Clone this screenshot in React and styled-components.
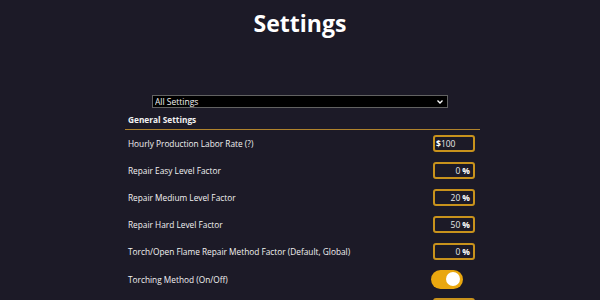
import React from 'react'
import styled, { createGlobalStyle } from 'styled-components'

const GlobalStyle = createGlobalStyle`
  html, body {
    margin: 0;
    padding: 0;
    background: #1c1a27;
    color: #f2f2f2;
    font-family: "Open Sans", "Noto Sans", sans-serif;
    overflow: hidden;
  }
`

const Page = styled.div`
  width: 600px;
  height: 300px;
  display: flex;
  flex-direction: column;
  align-items: center;
`

const Title = styled.h1`
  margin: 6px 0 0;
  font-size: 23px;
  font-weight: 700;
  line-height: 34px;
  color: #ffffff;
`

const Filter = styled.select`
  margin-top: 55px;
  width: 296px;
  height: 15px;
  padding: 0 2px;
  background: #000;
  color: #f0f0f0;
  border: 1px solid #626262;
  font-family: inherit;
  font-size: 8.5px;
  appearance: none;
  background-image: url("data:image/svg+xml;utf8,<svg xmlns='http://www.w3.org/2000/svg' width='8' height='8' viewBox='0 0 8 8'><path d='M1.5 2.5 L4 5 L6.5 2.5' fill='none' stroke='white' stroke-width='1.3'/></svg>");
  background-repeat: no-repeat;
  background-position: right 3px center;
  outline: none;
`

const Panel = styled.div`
  width: 355px;
  margin: 6px 0 0 5px;
`

const SectionTitle = styled.div`
  font-size: 8.3px;
  font-weight: 700;
  padding: 0 3px 3px;
  border-bottom: 1px solid #b0832c;
  line-height: 12px;
`

const Row = styled.div`
  display: flex;
  align-items: center;
  justify-content: space-between;
  height: ${(p) => p.$h || 27}px;
  padding: 0 5px 0 3px;
  font-size: 8.3px;
`

const Box = styled.div`
  box-sizing: border-box;
  width: 42px;
  height: 17px;
  border: 2px solid #c8921c;
  border-radius: 3px;
  display: flex;
  align-items: center;
  justify-content: ${(p) => (p.$left ? 'flex-start' : 'flex-end')};
  padding: 0 3px 0 1px;
  font-size: 8.5px;
  color: #e8e8e8;
  gap: ${(p) => (p.$left ? 0 : 2)}px;
`

const Sign = styled.b`
  font-weight: 700;
  color: #fff;
`

const Toggle = styled.div`
  width: 32px;
  height: 19px;
  margin-right: 12px;
  border-radius: 10px;
  background: #e9a70f;
  display: flex;
  align-items: center;
  justify-content: flex-end;
  padding: 0 3px;
  box-sizing: border-box;
  &::after {
    content: '';
    width: 14px;
    height: 14px;
    border-radius: 50%;
    background: #fff;
  }
`

const rows = [
  { label: 'Hourly Production Labor Rate (?)', value: '100', money: true },
  { label: 'Repair Easy Level Factor', value: '0' },
  { label: 'Repair Medium Level Factor', value: '20' },
  { label: 'Repair Hard Level Factor', value: '50' },
  { label: 'Torch/Open Flame Repair Method Factor (Default, Global)', value: '0' },
]

export default function App() {
  return (
    <Page>
      <GlobalStyle />
      <Title>Settings</Title>
      <Filter defaultValue="all">
        <option value="all">All Settings</option>
      </Filter>
      <Panel>
        <SectionTitle>General Settings</SectionTitle>
        {rows.map((r) => (
          <Row key={r.label}>
            <span>{r.label}</span>
            {r.money ? (
              <Box $left>
                <Sign>$</Sign>
                {r.value}
              </Box>
            ) : (
              <Box>
                {r.value}
                <Sign>%</Sign>
              </Box>
            )}
          </Row>
        ))}
        <Row $h={28}>
          <span>Torching Method (On/Off)</span>
          <Toggle />
        </Row>
        <Row>
          <span />
          <Box />
        </Row>
      </Panel>
    </Page>
  )
}
